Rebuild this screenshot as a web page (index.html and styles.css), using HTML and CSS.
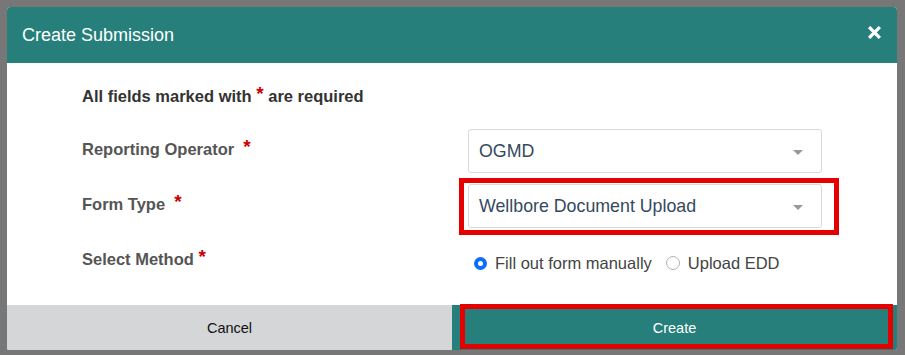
FILE: index.html
```html
<!DOCTYPE html>
<html>
<head>
<meta charset="utf-8">
<link rel="stylesheet" href="styles.css">
</head>
<body>
<div class="backdrop">
  <div class="modal">
    <div class="modal-header">
      <span class="modal-title">Create Submission</span>
      <button class="close" aria-label="Close">
        <svg width="13" height="13" viewBox="0 0 13 13"><path d="M2.2 2.2 L10.8 10.8 M10.8 2.2 L2.2 10.8" stroke="#fff" stroke-width="3.2" stroke-linecap="square"/></svg>
      </button>
    </div>
    <div class="modal-body">
      <div class="note">All fields marked with <span class="req">*</span> are required</div>
      <div class="row">
        <label class="label">Reporting Operator&nbsp; <span class="req">*</span></label>
        <div class="select"><span>OGMD</span><i class="caret"></i></div>
      </div>
      <div class="row">
        <label class="label">Form Type&nbsp; <span class="req">*</span></label>
        <div class="select highlight"><span>Wellbore Document Upload</span><i class="caret"></i></div>
      </div>
      <div class="row">
        <label class="label">Select Method <span class="req">*</span></label>
        <div class="radios">
          <span class="radio checked"></span><span class="radio-label">Fill out form manually</span>
          <span class="radio"></span><span class="radio-label">Upload EDD</span>
        </div>
      </div>
    </div>
    <div class="modal-footer">
      <button class="btn btn-cancel">Cancel</button>
      <button class="btn btn-create highlight-btn">Create</button>
    </div>
  </div>
</div>
</body>
</html>
```
FILE: styles.css
```css
html, body {
  margin: 0;
  padding: 0;
}
body {
  background: #777777;
  font-family: "Liberation Sans", Arial, sans-serif;
  width: 905px;
  height: 355px;
  overflow: hidden;
}
.backdrop {
  padding: 7px 8px 0 7px;
}
.modal {
  width: 890px;
  height: 343px;
  background: #fff;
  border-radius: 4px 4px 2px 2px;
  overflow: hidden;
  display: flex;
  flex-direction: column;
}
.modal-header {
  height: 56px;
  background: #267f7b;
  display: flex;
  align-items: center;
  justify-content: space-between;
  padding: 0 15px 0 15px;
  flex: none;
}
.modal-title {
  color: #fff;
  font-size: 18px;
}
.close {
  background: none;
  border: 0;
  padding: 0;
  margin-top: -6px;
  margin-right: 1px;
  width: 13px;
  height: 13px;
  display: flex;
}
.modal-body {
  flex: 1;
  padding: 22px 0 0 75px;
}
.note {
  font-size: 16.5px;
  font-weight: bold;
  color: #333;
  height: 22px;
  line-height: 22px;
  margin-bottom: 22px;
}
.req {
  color: #c00;
  font-size: 19px;
  position: relative;
  top: -2px;
}
.row {
  display: grid;
  grid-template-columns: 386px 354px;
  align-items: center;
  height: 44px;
  margin-bottom: 11px;
}
.row:last-child {
  margin-bottom: 0;
}
.label {
  font-size: 16.5px;
  font-weight: bold;
  color: #555;
  margin-top: -4px;
}
.select {
  height: 42px;
  border: 1px solid #d9d9d9;
  border-radius: 3px;
  display: flex;
  align-items: center;
  justify-content: space-between;
  padding: 0 18px 0 10px;
  font-size: 17.8px;
  color: #34495e;
  position: relative;
}
.caret {
  width: 0;
  height: 0;
  border-left: 5px solid transparent;
  border-right: 5px solid transparent;
  border-top: 5px solid #999;
  margin-top: 2px;
}
.highlight::after {
  content: "";
  position: absolute;
  left: -10px;
  right: -18px;
  top: -7px;
  bottom: -8px;
  border: 5px solid #e50000;
  pointer-events: none;
}
.radios {
  display: flex;
  align-items: center;
  font-size: 16.5px;
  color: #444;
  padding-left: 6px;
  padding-top: 4px;
}
.radio {
  width: 12px;
  height: 12px;
  border: 1px solid #adb5bd;
  border-radius: 50%;
  display: inline-block;
  margin-right: 8px;
  box-sizing: content-box;
}
.radio.checked {
  border: 4.5px solid #0d6efd;
  width: 5px;
  height: 5px;
  background: #fff;
}
.radio-label {
  margin-right: 14px;
}
.modal-footer {
  height: 45px;
  display: flex;
  flex: none;
}
.btn {
  flex: 1;
  border: 0;
  margin: 0;
  font-family: "Liberation Sans", Arial, sans-serif;
  font-size: 14.5px;
}
.btn-cancel {
  background: #d5d6d8;
  color: #111;
}
.btn-create {
  background: #267f7b;
  color: #fff;
  position: relative;
}
.highlight-btn::after {
  content: "";
  position: absolute;
  left: 8px;
  right: 4px;
  top: -1px;
  bottom: 1px;
  border: 5px solid #e50000;
}
```
